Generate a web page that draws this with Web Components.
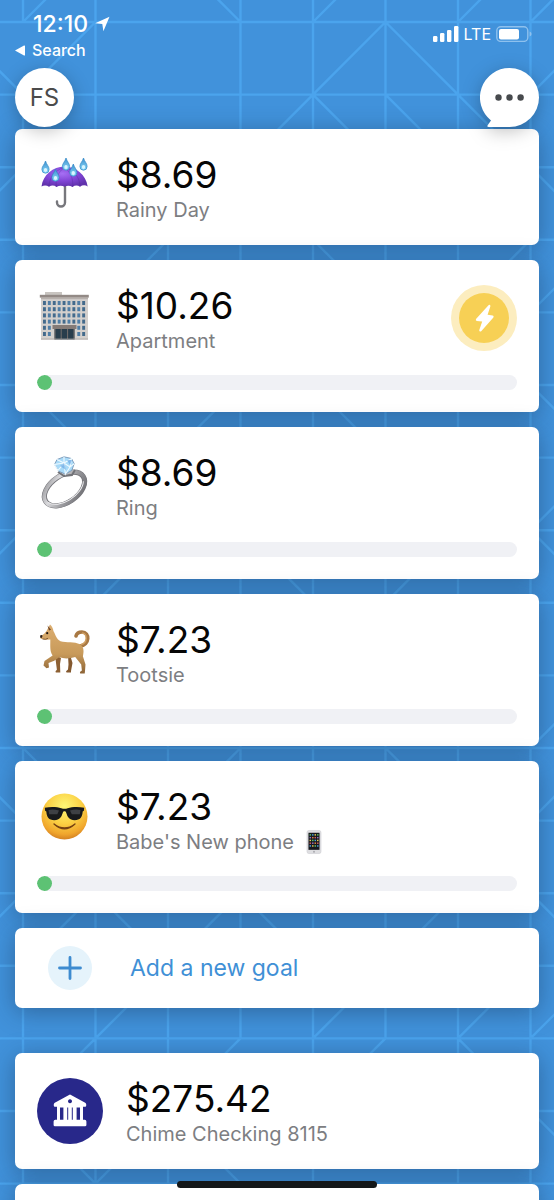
<!DOCTYPE html>
<html lang="en">
<head>
<meta charset="utf-8">
<meta name="viewport" content="width=device-width, initial-scale=1">
<title>Savings goals</title>
<style>
  html, body { margin: 0; height: 100%; }
  body { font-family: Inter, "Liberation Sans", sans-serif; background: #4192db; }
</style>
</head>
<body>
<savings-app>
  <phone-status slot="status"></phone-status>
  <top-nav slot="nav"></top-nav>
  <goal-card amount="$8.69" label="Rainy Day"><emoji-art slot="icon" name="umbrella"></emoji-art></goal-card>
  <goal-card amount="$10.26" label="Apartment" progress="3"><emoji-art slot="icon" name="building"></emoji-art><boost-button slot="action"></boost-button></goal-card>
  <goal-card amount="$8.69" label="Ring" progress="3"><emoji-art slot="icon" name="ring"></emoji-art></goal-card>
  <goal-card amount="$7.23" label="Tootsie" progress="3"><emoji-art slot="icon" name="dog"></emoji-art></goal-card>
  <goal-card amount="$7.23" label="Babe's New phone" progress="3"><emoji-art slot="icon" name="cool"></emoji-art><emoji-art slot="suffix" name="phone"></emoji-art></goal-card>
  <add-goal>Add a new goal</add-goal>
  <account-card slot="accounts" amount="$275.42" label="Chime Checking 8115"></account-card>
  <account-card slot="accounts" empty></account-card>
</savings-app>

<script>
const define = (name, html, setup) => customElements.define(name, class extends HTMLElement {
  constructor() {
    super();
    this.attachShadow({ mode: 'open' });
  }
  connectedCallback() {
    this.shadowRoot.innerHTML = html;
    if (setup) setup(this, this.shadowRoot);
  }
});

const CARD = `
  :host { display: block; box-sizing: border-box; background: #fff; border-radius: 7px;
    box-shadow: 0 4px 24px rgba(15, 35, 60, .38); }
  .row { display: flex; align-items: flex-start; }
  .text { flex: 1; min-width: 0; }
  .amount { font-size: 37px; line-height: 46px; color: #060606; }
  .label { display: flex; gap: 10px; align-items: center; font-size: 20px; line-height: 24px; color: #7d7e82; }
`;

/* Blueprint lines: each diagonal is [column, row, column, row] on a square grid. */
define('grid-pattern', `
  <style>
    :host { display: block; }
    svg { display: block; width: 100%; height: 100%; }
  </style>
  <svg aria-hidden="true" fill="none" stroke="#4ba4ed" stroke-width="2.4"></svg>`, (el, root) => {
  const X = c => 23 + c * 72.5, Y = r => 22 + r * 72.6;
  let d = '';
  for (let r = 0; r < 17; r++) d += `M0 ${Y(r)}H2000`;
  const cols = { 0: [[-1, 0], [1, 17]], 2: [[2, 17]], 3: [[-1, 14]], 5: [[-1, 14]] };
  for (let c = 0; c < 26; c++)
    for (const [a, b] of cols[c] || [[-1, 17]]) d += `M${X(c)} ${Y(a)}V${Y(b)}`;
  const diag = [
    [0,0,1,-1],[1,0,0,1],[-1,0,0,1],[3,0,2,-1],[4,0,5,-1],[6,0,7,-1],[7,0,8,-1],
    [5,0,4,1],[5,0,6,1],[4,1,3,2],[4,1,5,2],[5,1,6,2],[6,1,7,2],[7,1,8,0],
    [-1,3,0,2],[2,3,1,4],[4,3,5,4],[6,4,7,3],[7,2,8,3],[7,4,8,3],[7,5,8,6],
    [0,5,1,6],[2,6,3,5],[4,5,5,6],[7,7,8,6],[7,7,8,8],[-1,8,0,7],
    [1,8,2,7],[3,7,4,8],[5,8,6,7],[7,10,8,9],[0,10,1,11],[2,11,3,10],[5,10,6,11],
    [7,11,8,10],[-1,10,0,11],[0,13,1,12],[1,12,2,13],[2,13,3,12],[3,12,4,13],
    [5,13,6,12],[-1,13,0,12],[7,12,8,13],[1,14,2,13],[4,14,5,13],[6,14,7,13],
    [7,14,8,13],[1,14,0,15],[3,14,2,15],[5,14,4,15],[6,14,7,15],
    [0,15,1,16],[2,15,1,16],[2,15,3,16],[7,15,8,16]];
  for (const [a, b, c, e] of diag) d += `M${X(a)} ${Y(b)}L${X(c)} ${Y(e)}`;
  root.querySelector('svg').innerHTML = `<path d="${d}"/>`;
});

define('savings-app', `
  <style>
    :host { display: block; position: relative; height: 100vh; overflow: hidden; background: #4192db; }
    grid-pattern { position: absolute; inset: 0; }
    .scroll { position: relative; height: 100%; overflow-y: auto; scrollbar-width: none; }
    header { position: relative; z-index: 1; }
    main { padding: 2px 15px 15px; }
    section { display: flex; flex-direction: column; gap: 15px; }
    section + section { margin-top: 45px; }
    .home { position: absolute; bottom: 12px; left: 0; right: 0; width: 36%; height: 7px; margin: 0 auto; border-radius: 4px; background: #141718; }
  </style>
  <grid-pattern></grid-pattern>
  <div class="scroll">
    <header><slot name="status"></slot><slot name="nav"></slot></header>
    <main>
      <section aria-label="Goals"><slot></slot></section>
      <section aria-label="Accounts"><slot name="accounts"></slot></section>
    </main>
  </div>
  <div class="home"></div>`);

define('phone-status', `
  <style>
    :host { display: flex; justify-content: space-between; box-sizing: border-box; height: 68px; padding: 10px 22px 0 15px; color: #fff; }
    .time { display: flex; align-items: center; gap: 7px; padding-left: 18px; font-size: 23px; line-height: 28px; font-weight: 500; }
    a { display: flex; align-items: center; gap: 7px; font-size: 16px; line-height: 24px; font-weight: 500; color: #fff; text-decoration: none; }
    .signal { display: flex; align-items: center; gap: 5px; height: 48px; font-size: 16px; }
    svg { display: block; flex: none; }
  </style>
  <div>
    <div class="time"><span>12:10</span>
      <svg width="15" height="16" viewBox="0 0 15 16" fill="#fff" aria-hidden="true"><path d="M14.5.7 8.4 15.3 7.3 8 .2 7.3z"/></svg></div>
    <a href="#search"><svg width="10" height="11" viewBox="0 0 10 11" fill="#fff" aria-hidden="true"><path d="M0 5.5 9 .5q1-.4 1 .6v8.8q0 1-1 .6z"/></svg>Search</a>
  </div>
  <div class="signal">
    <svg width="26" height="16" viewBox="0 0 26 16" fill="#fff" aria-hidden="true"><rect y="10" width="4.4" height="6" rx="1.3"/><rect x="7" y="7" width="4.4" height="9" rx="1.3"/><rect x="14" y="4" width="4.4" height="12" rx="1.3"/><rect x="21" y="0" width="4.4" height="16" rx="1.3"/></svg>
    <span>LTE</span>
    <svg width="36" height="16" viewBox="0 0 36 16" aria-hidden="true"><rect x=".8" y=".8" width="31" height="14.6" rx="4" fill="none" stroke="#8ec1ee" stroke-width="1.4"/><path d="M33.6 5.6q2 .6 2 2.5t-2 2.5z" fill="#8ec1ee"/><rect x="3" y="3" width="20" height="10.4" rx="2" fill="#fff"/></svg>
  </div>`);

define('top-nav', `
  <style>
    :host { display: flex; justify-content: space-between; padding: 0 15px; }
    button { display: block; width: 59px; height: 59px; padding: 0; border: 0; background: none; font: inherit; color: #4b4b4b; }
    .who { border-radius: 50%; background: #fff; font-size: 24px; box-shadow: 0 4px 18px rgba(0, 0, 0, .25); }
    .chat { filter: drop-shadow(0 4px 9px rgba(0, 0, 0, .25)); }
    svg { display: block; }
  </style>
  <button class="who">FS</button>
  <button class="chat" aria-label="Messages">
    <svg width="59" height="59" viewBox="0 0 59 59"><path fill="#fff" d="M29.5 0A29.5 29.5 0 0 1 29.5 59H8.500C7.200 59 7.300 57.600 8 56.800L11 52.500A29.500 29.500 0 0 1 29.500 0z"/><g fill="#474a4d"><circle cx="18.5" cy="29.5" r="3.2"/><circle cx="29.5" cy="29.5" r="3.2"/><circle cx="40.6" cy="29.5" r="3.2"/></g></svg>
  </button>`);

define('goal-card', `
  <style>
    ${CARD}
    :host { padding: 23px 22px; }
    :host([progress]) { padding-bottom: 22px; }
    .row { gap: 25px; }
    .icon { flex: none; width: 54px; height: 54px; margin-top: 7px; }
    ::slotted([slot=action]) { margin-top: 2px; }
    progress { display: none; }
    :host([progress]) progress { display: block; width: 100%; height: 15px; margin-top: 22px; appearance: none; border: 0; border-radius: 8px; overflow: hidden; background: #f0f1f5; }
    progress::-webkit-progress-bar { background: #f0f1f5; }
    progress::-webkit-progress-value { min-width: 15px; border-radius: 8px; background: #5dc274; }
  </style>
  <div class="row">
    <div class="icon"><slot name="icon"></slot></div>
    <div class="text"><div class="amount"></div><div class="label"><span></span><slot name="suffix"></slot></div></div>
    <slot name="action"></slot>
  </div>
  <progress max="100"></progress>`, (el, root) => {
  root.querySelector('.amount').textContent = el.getAttribute('amount');
  root.querySelector('.label span').textContent = el.getAttribute('label');
  const bar = root.querySelector('progress');
  bar.value = +el.getAttribute('progress') || 0;
  bar.setAttribute('aria-label', el.getAttribute('label') + ' progress');
});

define('boost-button', `
  <style>
    :host { display: block; flex: none; }
    button { display: block; padding: 0; border: 0; background: none; }
    svg { display: block; }
  </style>
  <button aria-label="Boost"><svg width="66" height="66" viewBox="0 0 66 66"><circle cx="33" cy="33" r="33" fill="#fcedbf"/><circle cx="33" cy="33" r="25" fill="#f7d055"/><path d="M37.500 20.200 25 34Q24.200 35.600 25.800 35.900L31.200 36.500 28.200 45.200Q28.400 47.200 30.200 46.200L42.400 32.400Q43.200 30.800 41.600 30.500L36.600 29.800 39.400 21.200Q39.300 19.200 37.500 20.200z" fill="#fff"/></svg></button>`);

define('add-goal', `
  <style>
    ${CARD}
    :host { padding: 0; }
    button { display: flex; align-items: center; gap: 38px; width: 100%; min-height: 80px; padding: 0 33px; border: 0; background: none; font: inherit; font-size: 23px; line-height: 28px; color: #3f90d6; text-align: left; }
    svg { display: block; flex: none; }
  </style>
  <button><svg width="44" height="44" viewBox="0 0 44 44" aria-hidden="true"><circle cx="22" cy="22" r="22" fill="#e5f3fb"/><path d="M22 11.500v21M11.500 22h21" stroke="#3d8bd0" stroke-width="2.800" stroke-linecap="round"/></svg><span><slot></slot></span></button>`);

define('account-card', `
  <style>
    ${CARD}
    :host { min-height: 116px; padding: 23px 22px; }
    .row { gap: 23px; }
    svg { display: block; flex: none; margin-top: 2px; }
    :host([empty]) .row { display: none; }
  </style>
  <div class="row">
    <svg width="66" height="66" viewBox="0 0 66 66" aria-hidden="true"><circle cx="33" cy="33" r="33" fill="#28288a"/>
      <path fill="#fff" fill-rule="evenodd" d="M32 16.900q1-.6 2 0l14.200 7.800q1 .5 1 1.500v1.600q0 1-1 1H46v13h1.700q1.700 0 1.700 1.600v3.500q0 1.400-1.400 1.400H18q-1.400 0-1.400-1.400v-3.500q0-1.600 1.700-1.600H20v-13h-2.200q-1 0-1-1v-1.600q0-1 1-1.500zM33 21.200a2 2 0 1 0 .01 0zM23 29.500v12.300h3.400V29.500zm7.200 0v12.300h1V29.500zm0 0M30.600 29.500v12.300h.01V29.500zM34.800 29.500v12.300h1V29.500zM39.600 29.500v12.300H43V29.500z"/></svg>
    <div class="text"><div class="amount"></div><div class="label"></div></div>
  </div>`, (el, root) => {
  root.querySelector('.amount').textContent = el.getAttribute('amount') || '';
  root.querySelector('.label').textContent = el.getAttribute('label') || '';
});

const drop = (x, y) => `<path d="M${x} ${y}c1 3.500 3.600 5.500 3.600 8.400a3.600 3.800 0 0 1-7.200 0c0-2.900 2.600-4.900 3.600-8.400z" fill="url(#drop)" stroke="#2f86c4" stroke-width=".7"/><ellipse cx="${x}" cy="${y + 9}" rx="1.700" ry="2" fill="#d9f6ff"/>`;

const ART = {
  umbrella: () => `<defs><linearGradient id="drop" x2="0" y2="1"><stop stop-color="#3b8fcf"/><stop offset="1" stop-color="#8fdcfa"/></linearGradient>
    <radialGradient id="can" cx=".45" cy=".35" r=".65"><stop stop-color="#a66ff4"/><stop offset=".55" stop-color="#8145d6"/><stop offset="1" stop-color="#6132ac"/></radialGradient></defs>
    <path d="M28 26v17.500a4 4 0 0 1-8 0v-1" fill="none" stroke="#77777c" stroke-width="2.400" stroke-linecap="round"/>
    <path d="M4.500 27.500C6 16 16 7.500 27.500 7.500S49 16 50.700 27.500q-3.700-2.500-7.700.2-3.800-2.500-7.500.3-4-2.600-8-.2-4-2.400-8 .2-3.600-2.800-7.500-.3-3.700-2.400-7.500-.2z" fill="url(#can)"/>
    <path d="M27.500 8C19 15 18.500 22 19.500 28M27.500 8C35 15 36.500 22 35.500 28M27.500 8C15 13 12.500 20 12 27.500M27.500 8C40 13 42.500 20 43 27.500" stroke="#4f2296" stroke-width=".7" fill="none" opacity=".45"/>
    ${drop(8.500, 2)}${drop(29, -1)}${drop(46.500, -1)}${drop(18.500, 10)}${drop(36.300, 5)}`,
  building: () => {
    let w = '';
    for (let r = 0; r < 6; r++) for (let c = 0; c < 9; c++) {
      if (r > 3 && c > 1 && c < 7) continue;
      w += `<rect x="${6 + c * 4.900}" y="${11 + r * 6.200}" width="2.900" height="4" fill="${c % 2 ? '#4f7da5' : '#436a8c'}"/>`;
    }
    return `<rect x="8" y="2" width="17" height="4" fill="#c9c5c1"/><rect x="4" y="6.500" width="47" height="43" fill="#d4d0cd"/><rect x="2.800" y="4.800" width="49" height="2.800" fill="#938a86"/><rect x="4" y="7.600" width="47" height="1.600" fill="#b7b1ad"/>${w}
    <rect x="15.500" y="35" width="24" height="4" fill="#857b77"/><rect x="17.500" y="39" width="20" height="10.500" fill="#293d4c"/><path d="M18 39v10.500M24.200 39v10.500M30.600 39v10.500M37 39v10.500" stroke="#756f6d" stroke-width="1"/><rect x="4" y="48.400" width="47" height="1.400" fill="#a9a4a1" opacity=".6"/>`;
  },
  ring: () => `<defs><linearGradient id="sil" x2="1" y2="1"><stop stop-color="#8a8a8e"/><stop offset=".3" stop-color="#d9d9dc"/><stop offset=".6" stop-color="#9a9a9e"/><stop offset="1" stop-color="#66666b"/></linearGradient></defs>
    <g transform="rotate(-34 27.500 32)"><ellipse cx="27.500" cy="32" rx="22.500" ry="13.500" fill="none" stroke="#75757a" stroke-width="5.200"/><ellipse cx="27.500" cy="32" rx="22.700" ry="13.700" fill="none" stroke="url(#sil)" stroke-width="3.800"/><path d="M6.500 34a21.500 12.500 0 0 0 41 2" stroke="#f1f1f3" stroke-width="1" fill="none"/></g>
    <path d="M21 15l6 4 8-1 3-5" stroke="#717277" stroke-width="2" fill="none"/>
    <g transform="translate(-1 -1)"><path d="M21 3.500 28 .8l7.500 1.700 2.700 5.200-2.300 6.500-6.500 4-6.700-3-4.200-6.800z" fill="#a8daf8" stroke="#7897b8" stroke-width=".9"/>
    <path d="M21 3.500 28 7l7.500-4.500L34 11l4.200-3.300M34 11l-4.600 7.200L28 7l-6 7.500L18.500 8.400 28 7l6 4M28 7V.8" fill="none" stroke="#effaff" stroke-width="1.100"/>
    <path d="m24 10 4-3 2 7zM31 4l3 5 2-5z" fill="#5e9fe0" opacity=".6"/></g>`,
  dog: () => `<defs><linearGradient id="fur" x2="0" y2="1"><stop stop-color="#dcae70"/><stop offset=".6" stop-color="#c89a5a"/><stop offset="1" stop-color="#8c6336"/></linearGradient></defs>
    <path d="M43 22C53 21 53 8 45 8q-5 0-6 4" fill="none" stroke="#a87843" stroke-width="3.600" stroke-linecap="round"/>
    <path d="M44 20.500C51 19 50.500 9.500 45 9" fill="none" stroke="#cf9f62" stroke-width="1.400"/>
    <path d="M31 31l3 3 1.500 5-1.500 8v1.500h-4.500l-.5-1.200 2-1.800.5-5z" fill="#84592f"/>
    <path d="M18 31l6 3-1 6 .3 8.500h-4.500l-.3-1.200 1.400-1.500z" fill="#8d6033"/>
    <path d="M13 .5c1.800 1.500 3.300 4 3.400 6.600 2.500 4 2.600 8 7.100 10.200 6 1.700 14 .2 19.500 3 4.500 3 3.800 8 2.900 12l2.600 8.200-.5 6.500-.3 2.500h-4.500l-.3-1.500 2-1.500-.7-6-6-7.500c-5 1.700-11 2-16 .3l-5 3.500-5.700 2.200.5 4.500-2.500.8-3-2.800 1-4.500 8.100-5.600c-3-4-2.200-9.500-2.300-15.800l-4.300.2-5.300-1-.5-2.300 4-2.700 2.300-2.800z" fill="url(#fur)"/>
    <path d="M12 6.500 10.500 1.500l3.600 4.200z" fill="#73482a"/><circle cx="10.200" cy="9.200" r="1.100" fill="#1e1510"/><path d="M3.300 11.200q2-.8 2.200.8l-.8 2-1.600-.6z" fill="#2b211e"/><path d="M5.500 15q3 1 5.500-.7" stroke="#6c4524" stroke-width=".8" fill="none"/>`,
  cool: () => `<defs><radialGradient id="face" cx=".5" cy=".28" r=".74"><stop stop-color="#fff777"/><stop offset=".5" stop-color="#fbd044"/><stop offset=".82" stop-color="#f0a52c"/><stop offset="1" stop-color="#cf7b20"/></radialGradient></defs>
    <circle cx="27.500" cy="25.500" r="23" fill="url(#face)"/>
    <path d="M17 33q10.500 8 21 0-10.500 9.500-21 0z" fill="#754012" stroke="#754012" stroke-width="1.300" stroke-linejoin="round"/>
    <path d="M7.800 16.700c6-1 12.500-.8 16.500.6q3.200 1 6.400 0c4-1.400 10.500-1.600 16.500-.6l-.3 3-1.200.8c-.4 5.500-2.500 8.700-8 8.700-5.800 0-7.300-4-8.500-7.500-.6-1.800-2.800-1.800-3.400 0-1.200 3.500-2.700 7.500-8.500 7.500-5.500 0-7.600-3.200-8-8.700l-1.200-.8z" fill="#18191b"/>
    <path d="M11.500 19q5-1 10.500.6l-1.700 3.600H12.200zM33 19.600q5-1.600 10.500-.6l-.7 4.200h-8z" fill="#4b4e53" opacity=".75"/>`,
  phone: () => {
    let a = '';
    const cs = ['#5cc66b', '#df8a40', '#4aa4dd', '#d35c62', '#e9ce55', '#9379cb'];
    for (let r = 0; r < 5; r++) for (let c = 0; c < 4; c++) a += `<rect x="${3.200 + c * 2.700}" y="${4.500 + r * 3}" width="1.600" height="1.600" fill="${cs[(r * 5 + c * 2) % 6]}"/>`;
    return `<rect x=".5" y=".5" width="15" height="25" rx="2" fill="#dedee1" stroke="#d2d2d6" stroke-width=".8"/><rect x="2" y="3" width="12" height="18.500" fill="#17181d"/>${a}<circle cx="8" cy="23.600" r="1.100" fill="#aaaab0"/>`;
  }
};

define('emoji-art', `
  <style>
    :host { display: block; width: 54px; height: 54px; }
    :host([name=phone]) { width: 16px; height: 24px; margin-left: 2px; }
    svg { display: block; width: 100%; height: 100%; overflow: visible; }
  </style>
  <svg aria-hidden="true"></svg>`, (el, root) => {
  const name = el.getAttribute('name'), svg = root.querySelector('svg');
  svg.setAttribute('viewBox', name === 'phone' ? '0 0 16 26' : '0 0 54 54');
  svg.innerHTML = ART[name]();
});
</script>
</body>
</html>
